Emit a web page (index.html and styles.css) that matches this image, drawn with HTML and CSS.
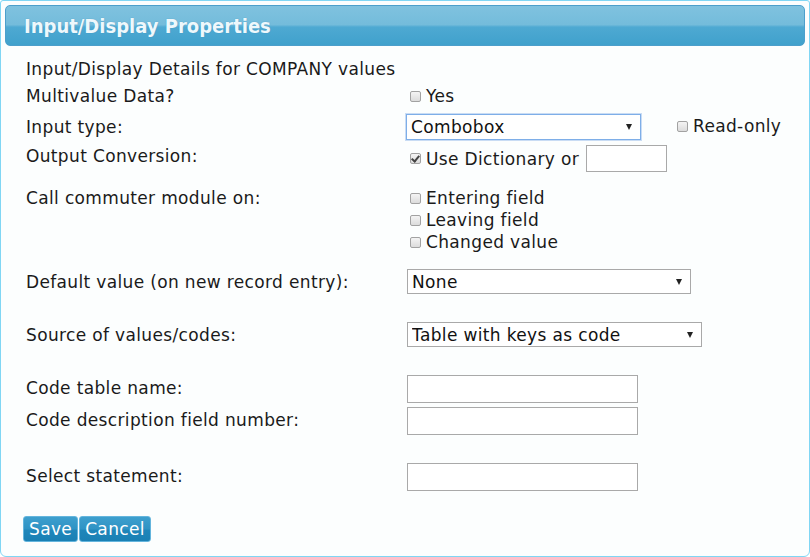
FILE: index.html
```html
<!DOCTYPE html>
<html lang="en">

<head>
    <meta charset="UTF-8">
    <meta name="viewport" content="width=device-width, initial-scale=1.0">
    <title>Input/Display Properties</title>
    <link rel="stylesheet" href="styles.css">
</head>

<body>
    <div class="painel">
        <div class="cabecalho">Input/Display Properties</div>
        <div class="conteudo">
            <div class="linha linhaTitulo">Input/Display Details for COMPANY values</div>

            <div class="linha linhaMulti">
                <div class="rotulo">Multivalue Data?</div>
                <div class="campo">
                    <label class="opcao"><input type="checkbox" class="caixa">Yes</label>
                </div>
            </div>

            <div class="linha linhaTipo">
                <div class="rotulo">Input type:</div>
                <div class="campo">
                    <span class="seletor seletorFoco larguraTipo">
                        <select><option>Combobox</option></select>
                    </span>
                    <label class="opcao opcaoLeitura"><input type="checkbox" class="caixa">Read-only</label>
                </div>
            </div>

            <div class="linha linhaSaida">
                <div class="rotulo">Output Conversion:</div>
                <div class="campo">
                    <label class="opcao"><input type="checkbox" class="caixa" checked>Use Dictionary or</label>
                    <input type="text" class="texto textoCurto">
                </div>
            </div>

            <div class="linha linhaComutador">
                <div class="rotulo">Call commuter module on:</div>
                <div class="campo coluna">
                    <label class="opcao"><input type="checkbox" class="caixa">Entering field</label>
                    <label class="opcao"><input type="checkbox" class="caixa">Leaving field</label>
                    <label class="opcao"><input type="checkbox" class="caixa">Changed value</label>
                </div>
            </div>

            <div class="linha linhaPadrao">
                <div class="rotulo">Default value (on new record entry):</div>
                <div class="campo">
                    <span class="seletor larguraPadrao">
                        <select><option>None</option></select>
                    </span>
                </div>
            </div>

            <div class="linha linhaFonte">
                <div class="rotulo">Source of values/codes:</div>
                <div class="campo">
                    <span class="seletor larguraFonte">
                        <select><option>Table with keys as code</option></select>
                    </span>
                </div>
            </div>

            <div class="linha linhaTabela">
                <div class="rotulo rotuloTexto">Code table name:</div>
                <div class="campo"><input type="text" class="texto"></div>
            </div>

            <div class="linha linhaDescricao">
                <div class="rotulo rotuloTexto">Code description field number:</div>
                <div class="campo"><input type="text" class="texto"></div>
            </div>

            <div class="linha linhaSelect">
                <div class="rotulo rotuloTexto">Select statement:</div>
                <div class="campo"><input type="text" class="texto"></div>
            </div>

            <div class="botoes">
                <button class="botao">Save</button><button class="botao">Cancel</button>
            </div>
        </div>
    </div>
</body>

</html>
```

FILE: styles.css
```css
body {
    margin: 0;
    background-color: white;
    font-family: "DejaVu Sans", Verdana, sans-serif;
    font-size: 17px;
    letter-spacing: 0.35px;
    color: #1a1a1a;
}

.painel {
    width: 810px;
    height: 557px;
    box-sizing: border-box;
    border: 1px solid #80d6f4;
    border-radius: 3px 3px 6px 6px;
    background-color: #fcfefe;
    overflow: hidden;
}

.cabecalho {
    margin: 4px 4px 0 4px;
    height: 41px;
    box-sizing: border-box;
    border: 1px solid #4c9fcb;
    border-radius: 5px;
    background: linear-gradient(#7fc2df, #74bcdb 48%, #4ea9d2 54%, #40a1cc);
    color: #eef8fc;
    font-family: "DejaVu Sans Condensed", "DejaVu Sans", sans-serif;
    font-weight: bold;
    font-size: 20px;
    letter-spacing: 0;
    line-height: 40px;
    padding-left: 18px;
    text-shadow: 0 0 1px #3b8fbb;
}

.conteudo {
    padding-left: 25px;
}

.linha {
    display: flex;
    line-height: 22px;
}

.rotulo {
    width: 381px;
    flex-shrink: 0;
}

.rotuloTexto {
    padding-top: 2px;
}

.campo {
    display: flex;
    align-items: center;
}

.coluna {
    flex-direction: column;
    align-items: flex-start;
}

.linhaTitulo { margin-top: 12px; }
.linhaMulti { margin-top: 5px; }
.linhaTipo { margin-top: 7px; align-items: center; }
.linhaSaida { margin-top: 5px; }
.linhaComutador { margin-top: 15px; }
.linhaPadrao { margin-top: 16px; align-items: center; }
.linhaFonte { margin-top: 28px; align-items: center; }
.linhaTabela { margin-top: 28px; }
.linhaDescricao { margin-top: 4px; }
.linhaSelect { margin-top: 28px; }

.opcao {
    display: flex;
    align-items: center;
    height: 22px;
}

.caixa {
    appearance: none;
    width: 11px;
    height: 11px;
    margin: 0 5px 0 3px;
    border: 1px solid #a2a2a2;
    border-radius: 2px;
    background: linear-gradient(#f4f4f4, #dcdcdc);
    box-sizing: border-box;
    position: relative;
    flex-shrink: 0;
}

.caixa:checked::after {
    content: "";
    position: absolute;
    left: 2px;
    top: 0px;
    width: 3px;
    height: 6px;
    border: solid #444;
    border-width: 0 2px 2px 0;
    transform: rotate(40deg);
}

.opcaoLeitura {
    margin-left: 33px;
    margin-top: -2px;
}

.seletor {
    position: relative;
    display: inline-block;
    height: 26px;
}

.seletor select {
    appearance: none;
    width: 100%;
    height: 100%;
    box-sizing: border-box;
    border: 1px solid #a9a9a9;
    background-color: white;
    font-family: inherit;
    font-size: 17px;
    letter-spacing: 0.35px;
    color: #111;
    padding: 0 0 0 4px;
    margin: 0;
    border-radius: 0;
}

.seletor::after {
    content: "";
    position: absolute;
    right: 9px;
    top: 10px;
    border-left: 3px solid transparent;
    border-right: 3px solid transparent;
    border-top: 6px solid #222;
}

.seletorFoco select {
    border-color: #7eaee8;
    box-shadow: 0 0 0 1px #c9dcf4;
}

.larguraTipo { width: 235px; margin-left: -1px; }
.larguraPadrao { width: 284px; height: 25px; }
.larguraFonte { width: 295px; height: 25px; }

.texto {
    width: 231px;
    height: 28px;
    box-sizing: border-box;
    border: 1px solid #a9a9a9;
    background-color: white;
    margin: 0;
    padding: 0 3px;
    font-family: inherit;
    font-size: 16px;
}

.textoCurto {
    width: 81px;
    height: 27px;
    margin-left: 7px;
}

.botoes {
    display: flex;
    gap: 1px;
    margin-top: 25px;
    margin-left: -3px;
}

.botao {
    height: 26px;
    box-sizing: border-box;
    border: 1px solid #64b5dd;
    border-radius: 3px;
    background: linear-gradient(#3d9fce, #2f93c4 50%, #1f86ba 55%, #1a80b4);
    color: white;
    font-family: inherit;
    font-size: 17px;
    letter-spacing: 0.35px;
    padding: 0 5px;
    cursor: pointer;
}
```
